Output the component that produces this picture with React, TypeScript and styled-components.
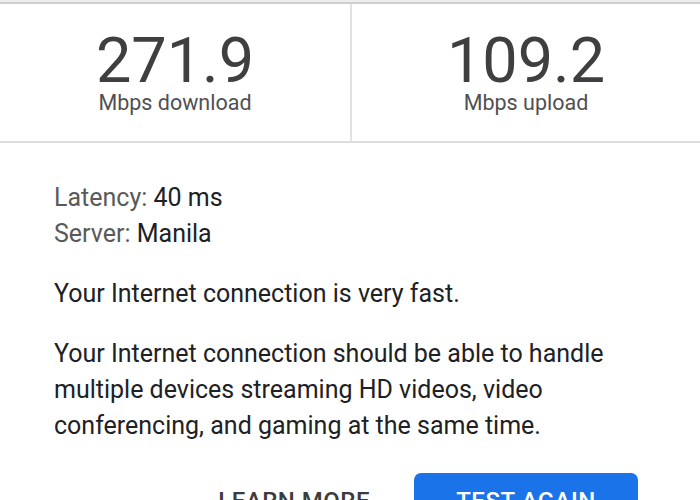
import React from "react";
import styled, { createGlobalStyle } from "styled-components";

const Global = createGlobalStyle`
  html, body { margin: 0; padding: 0; background: #fff; }
  body { font-family: Roboto, "Noto Sans", "Liberation Sans", sans-serif; overflow: hidden; }
`;

const Page = styled.div`
  width: 700px;
  height: 500px;
  overflow: hidden;
  background: #fff;
  border-top: 2px solid #ececec;
`;

const Stats = styled.div`
  display: grid;
  grid-template-columns: 350px 1fr;
  border-top: 2px solid #cfcfcf;
  border-bottom: 2px solid #dedede;
`;

const Stat = styled.div<{ $divider?: boolean }>`
  display: flex;
  flex-direction: column;
  align-items: center;
  padding: 25px 0 27px;
  border-left: ${(p) => (p.$divider ? "2px solid #e2e2e2" : "none")};
`;

const Value = styled.div`
  font-size: 63px;
  line-height: 63px;
  color: #3f3f3f;
  font-weight: 400;
`;

const Unit = styled.div`
  font-size: 21.5px;
  line-height: 22px;
  color: #505050;
`;

const Body = styled.div`
  padding: 37px 62px 0 54px;
`;

const Info = styled.div`
  font-size: 25px;
  line-height: 36px;
  color: #202124;
`;

const Label = styled.span`
  color: #5a5a5a;
`;

const Para = styled.p`
  margin: 24px 0 0;
  font-size: 25px;
  line-height: 36px;
  color: #202124;
`;

const Actions = styled.div`
  display: flex;
  justify-content: flex-end;
  align-items: center;
  gap: 44px;
  margin-top: 29px;
`;

const TextButton = styled.button`
  background: none;
  border: none;
  padding: 0;
  font-family: inherit;
  font-size: 24px;
  font-weight: 500;
  letter-spacing: 0.5px;
  color: #3c3c3c;
`;

const FilledButton = styled.button`
  background: #1a73e8;
  border: none;
  border-radius: 7px;
  width: 224px;
  height: 56px;
  font-family: inherit;
  font-size: 24px;
  font-weight: 500;
  letter-spacing: 0.5px;
  color: #fff;
`;

export default function App() {
  return (
    <>
      <Global />
      <Page>
        <Stats>
          <Stat>
            <Value>271.9</Value>
            <Unit>Mbps download</Unit>
          </Stat>
          <Stat $divider>
            <Value>109.2</Value>
            <Unit>Mbps upload</Unit>
          </Stat>
        </Stats>
        <Body>
          <Info>
            <div>
              <Label>Latency:</Label> 40 ms
            </div>
            <div>
              <Label>Server:</Label> Manila
            </div>
          </Info>
          <Para>Your Internet connection is very fast.</Para>
          <Para>
            Your Internet connection should be able to handle multiple devices
            streaming HD videos, video conferencing, and gaming at the same time.
          </Para>
          <Actions>
            <TextButton>LEARN MORE</TextButton>
            <FilledButton>TEST AGAIN</FilledButton>
          </Actions>
        </Body>
      </Page>
    </>
  );
}
